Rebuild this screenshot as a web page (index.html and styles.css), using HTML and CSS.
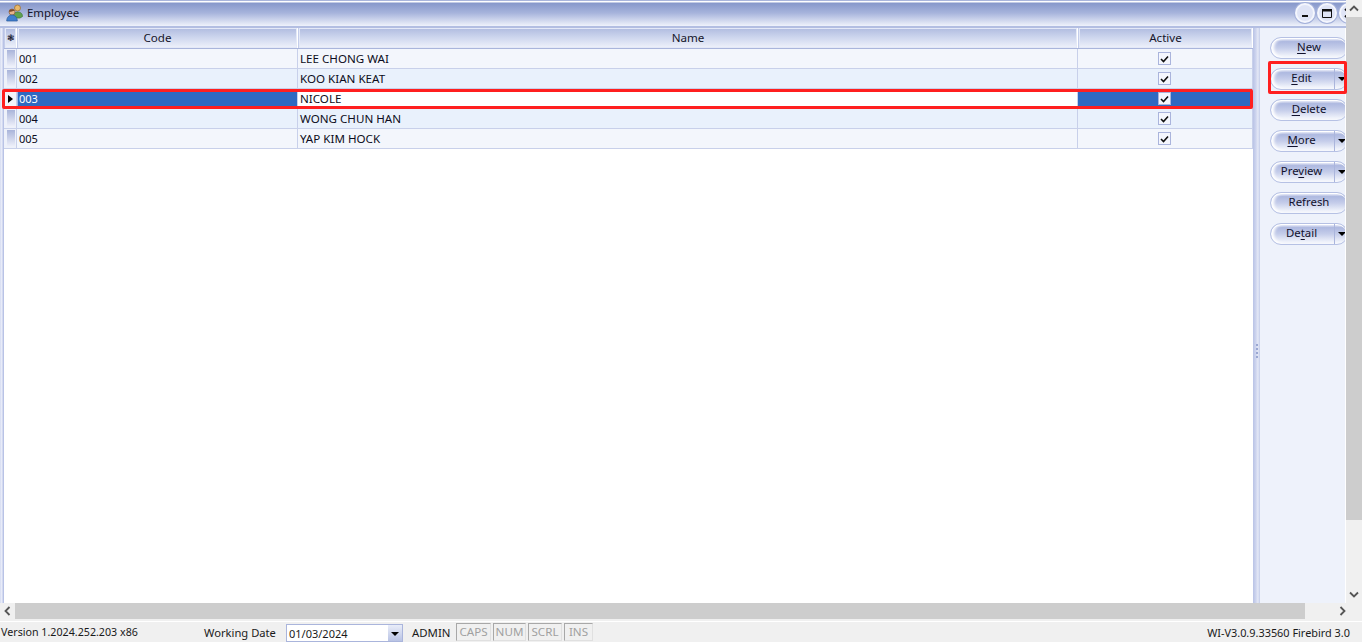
FILE: index.html
```html
<!DOCTYPE html>
<html lang="en">
<head>
<meta charset="utf-8">
<title>Employee</title>
<link rel="stylesheet" href="styles.css">
</head>
<body>
<div class="app">
  <div class="top">
    <div class="window">
      <div class="titlebar">
        <svg class="appicon" width="18" height="18" viewBox="0 0 18 18">
          <circle cx="11.5" cy="4" r="3" fill="#e9b86a" stroke="#9a6a2a" stroke-width=".7"/>
          <path d="M7 13c0-3 2-5 4.500-5S16.500 9 16.500 12.500L14 14H8z" fill="#5fa24f" stroke="#3f7a3a" stroke-width=".7"/>
          <circle cx="6" cy="8" r="3" fill="#e8b48a" stroke="#8a5a3a" stroke-width=".7"/>
          <path d="M6 5.200c-2 0-3 1-3 2.500 1.500 0 4-.5 5.500-1C8 5.600 7 5.200 6 5.200z" fill="#7a4a2a"/>
          <path d="M.7 17c0-3.500 2.300-6 5.300-6s5.300 2.500 5.300 6z" fill="#3f7fd0" stroke="#2a5a9a" stroke-width=".7"/>
        </svg>
        <span class="title">Employee</span>
        <div class="winbtns">
          <span class="winbtn"><svg width="10" height="10" viewBox="0 0 10 10"><rect x="2" y="7" width="6" height="2" fill="#111"/></svg></span>
          <span class="winbtn"><svg width="10" height="10" viewBox="0 0 10 10"><path d="M.5 1.500h9v8h-9z" fill="none" stroke="#111"/><rect x="0" y="1" width="10" height="2.500" fill="#111"/></svg></span>
          <span class="winbtn"><svg width="10" height="10" viewBox="0 0 10 10"><path d="M1 1l8 8M9 1l-8 8" stroke="#111" stroke-width="1.800"/></svg></span>
        </div>
      </div>
      <div class="body">
        <div class="grid">
          <div class="row head">
            <div class="hcell star">&#10051;</div>
            <div class="hcell">Code</div>
            <div class="hcell">Name</div>
            <div class="hcell">Active</div>
          </div>
          <div class="row odd">
            <div class="ind"><i></i></div><div class="cell">001</div><div class="cell name">LEE CHONG WAI</div>
            <div class="cell check"><span class="box"><svg width="9" height="8" viewBox="0 0 9 8"><path d="M1 4l2.500 2.500L8 1.500" fill="none" stroke="#111" stroke-width="1.600"/></svg></span></div>
          </div>
          <div class="row even">
            <div class="ind"><i></i></div><div class="cell">002</div><div class="cell name">KOO KIAN KEAT</div>
            <div class="cell check"><span class="box"><svg width="9" height="8" viewBox="0 0 9 8"><path d="M1 4l2.500 2.500L8 1.500" fill="none" stroke="#111" stroke-width="1.600"/></svg></span></div>
          </div>
          <div class="row selected">
            <div class="ind current"><b></b></div><div class="cell focus">003</div><div class="cell name">NICOLE</div>
            <div class="cell check"><span class="box"><svg width="9" height="8" viewBox="0 0 9 8"><path d="M1 4l2.500 2.500L8 1.500" fill="none" stroke="#111" stroke-width="1.600"/></svg></span></div>
          </div>
          <div class="row even">
            <div class="ind"><i></i></div><div class="cell">004</div><div class="cell name">WONG CHUN HAN</div>
            <div class="cell check"><span class="box"><svg width="9" height="8" viewBox="0 0 9 8"><path d="M1 4l2.500 2.500L8 1.500" fill="none" stroke="#111" stroke-width="1.600"/></svg></span></div>
          </div>
          <div class="row odd">
            <div class="ind"><i></i></div><div class="cell">005</div><div class="cell name">YAP KIM HOCK</div>
            <div class="cell check"><span class="box"><svg width="9" height="8" viewBox="0 0 9 8"><path d="M1 4l2.500 2.500L8 1.500" fill="none" stroke="#111" stroke-width="1.600"/></svg></span></div>
          </div>
        </div>
        <div class="splitter"><span class="grip"></span></div>
        <div class="side">
          <div class="btn"><span class="lbl"><u>N</u>ew</span></div>
          <div class="btn split"><span class="lbl"><u>E</u>dit</span><span class="drop"></span></div>
          <div class="btn"><span class="lbl"><u>D</u>elete</span></div>
          <div class="btn split"><span class="lbl"><u>M</u>ore</span><span class="drop"></span></div>
          <div class="btn split"><span class="lbl">Pre<u>v</u>iew</span><span class="drop"></span></div>
          <div class="btn"><span class="lbl">Refresh</span></div>
          <div class="btn split"><span class="lbl">De<u>t</u>ail</span><span class="drop"></span></div>
        </div>
      </div>
    </div>
    <div class="vscroll">
      <span class="sbtn"><svg width="10" height="7" viewBox="0 0 10 7"><path d="M1 5.500l4-4 4 4" fill="none" stroke="#555" stroke-width="1.800"/></svg></span>
      <span class="vthumb"></span>
      <span class="vtrack"></span>
      <span class="sbtn"><svg width="10" height="7" viewBox="0 0 10 7"><path d="M1 1.500l4 4 4-4" fill="none" stroke="#555" stroke-width="1.800"/></svg></span>
    </div>
  </div>
  <div class="hscroll">
    <span class="hbtn"><svg width="7" height="10" viewBox="0 0 7 10"><path d="M5.500 1l-4 4 4 4" fill="none" stroke="#555" stroke-width="1.800"/></svg></span>
    <span class="hthumb"></span>
    <span class="htrack"></span>
    <span class="hbtn"><svg width="7" height="10" viewBox="0 0 7 10"><path d="M1.500 1l4 4-4 4" fill="none" stroke="#555" stroke-width="1.800"/></svg></span>
  </div>
  <div class="status">
    <span class="version">Version 1.2024.252.203 x86</span>
    <span class="wd">Working Date</span>
    <div class="combo"><span class="date">01/03/2024</span><span class="combobtn"></span></div>
    <span class="user">ADMIN</span>
    <span class="key k1">CAPS</span>
    <span class="key k2">NUM</span>
    <span class="key k3">SCRL</span>
    <span class="key k4">INS</span>
    <span class="build">WI-V3.0.9.33560 Firebird 3.0</span>
  </div>
  <div class="mark mark-row"></div>
  <div class="mark mark-edit"></div>
</div>
</body>
</html>
```

FILE: styles.css
```css
* { box-sizing: border-box; }
html, body { margin: 0; padding: 0; background: #fff; overflow: hidden; }
body { font-family: "Noto Sans", "Liberation Sans", sans-serif; font-size: 11px; color: #111; }
.app { position: relative; width: 1362px; height: 642px; display: flex; flex-direction: column; background: #f0f0f0; }
.top { display: flex; height: 604px; }
.window { width: 1346px; display: flex; flex-direction: column; overflow: hidden; background: #fff; }
.titlebar { height: 28px; flex: none; display: flex; align-items: center; padding: 0 0 2px 6px;
  border-top: 1px solid #a9b5dc; border-bottom: 2px solid #b3bee2;
  background: linear-gradient(#fff 0, #fff 1px, #8798cb 2px, #a7b4dc 12px, #eff2fb 25px); }
.appicon { flex: none; }
.title { margin-left: 3px; color: #15152a; font-size: 11.4px; }
.winbtns { margin-left: auto; display: flex; gap: 2px; margin-right: -13px; }
.winbtn { width: 20px; height: 20px; border-radius: 50%; border: 2px solid #f4f6fd; display: flex; align-items: center; justify-content: center;
  background: #dfe4f6; box-shadow: 0 0 0 1px #a3b0da; }
.body { flex: 1; display: flex; min-height: 0; padding-left: 4px;
  background: linear-gradient(90deg, #d5dbf1 0, #eef1fb 2px, #b9c3e6 3px, #b9c3e6 4px) no-repeat 0 0 / 4px 100%; }
.grid { width: 1249px; flex: none; }
.row { display: grid; grid-template-columns: 13px 281px 780px 175px; height: 20px; }
.head { height: 21px; border-bottom: 1px solid #aab5dc; }
.hcell { text-align: center; line-height: 19px; color: #15152a; font-size: 11.6px; border-right: 1px solid #fff; box-shadow: inset 0 0 0 1px #e4e9f7;
  background: linear-gradient(#b0bbe0, #c9d2ec 40%, #eff2fb); border-left: 1px solid #c4cdea; }
.star { font-size: 9px; padding: 0; }
.cell { padding: 1px 0 0 2px; line-height: 18px; border-right: 1px solid #c8d0ea; border-bottom: 1px solid #c8d0ea; color: #0c0c20; white-space: nowrap; }
.odd .cell { background: #f3f6fc; }
.even .cell { background: #e9f1fc; }
.name { font-size: 11.6px; }
.ind { border-right: 1px solid #c8d0ea; border-bottom: 1px solid #c8d0ea; background: #eef1fa; padding: 1px 1px 1px 3px; }
.ind i { display: block; width: 8px; height: 100%; background: linear-gradient(#a9b4da, #f0f2fb); }
.current { background: #f2f4fb; display: flex; align-items: center; padding-left: 4px; }
.current b { width: 0; height: 0; border-left: 5px solid #000; border-top: 4.500px solid transparent; border-bottom: 4.500px solid transparent; }
.selected .cell { background: #fff; }
.selected .focus { background: #2f69c1; color: #fff; box-shadow: inset 1px 0 0 #9db8e6; }
.selected .check { background: #2f69c1; }
.check { display: flex; align-items: center; justify-content: center; padding: 0 2px 0 0; }
.box { width: 13px; height: 13px; border: 1px solid #aab4dc; background: #f4f6fd; display: flex; align-items: center; justify-content: center; }
.splitter { width: 7px; flex: none; display: flex; align-items: center; justify-content: center;
  background: linear-gradient(90deg, #b9c3e6, #cdd4ee 40%, #e4e8f6 70%, #c3cce9); }
.grip { width: 2px; height: 14px; margin-top: 70px; background: repeating-linear-gradient(#9aa7d2 0 2px, transparent 2px 4px); }
.side { flex: 1; background: #eef2fb; padding: 9px 0 0 10px; display: flex; flex-direction: column; gap: 9px; overflow: hidden; border-right: 1px solid #fff; font-size: 11.4px; }
.btn { flex: none; width: 78px; height: 22px; display: flex; align-items: stretch; border: 1px solid #b6c1e4; border-radius: 11px;
  background: linear-gradient(#f4f6fd, #aeb9e0 18%, #c5cdea 50%, #f0f3fb 90%);
  box-shadow: inset 3px 0 3px #fff, inset 0 1px 0 #fff; color: #11112c; }
.lbl { flex: 1; text-align: center; line-height: 17px; }
.split .lbl { padding-right: 2px; }
.lbl u { text-underline-offset: 2px; }
.drop { width: 13px; flex: none; border-left: 1px solid #aab5dc; position: relative; }
.drop::after { content: ""; position: absolute; left: 3px; top: 8px; border-top: 4px solid #000; border-left: 4px solid transparent; border-right: 4px solid transparent; }
.vscroll { width: 16px; flex: none; display: flex; flex-direction: column; background: #f0f0f0; }
.sbtn { height: 17px; flex: none; display: flex; align-items: center; justify-content: center; }
.vthumb { height: 503px; flex: none; background: #cdcdcd; }
.vtrack { flex: 1; }
.hscroll { height: 16px; flex: none; display: flex; background: #f0f0f0; }
.hbtn { width: 15px; flex: none; display: flex; align-items: center; justify-content: center; }
.hthumb { width: 1290px; flex: none; background: #cdcdcd; }
.htrack { flex: 1; }
.hscroll .hbtn:last-child { width: 52px; justify-content: flex-start; padding-left: 29px; }
.status { flex: 1; display: flex; align-items: center; margin-top: 2px; padding: 0 12px 0 1px; border-top: 1px solid #fff; background: #f0f0f0; white-space: nowrap; color: #1a1a1a; }
.version { width: 203px; font-size: 10.7px; }
.wd { width: 82px; font-size: 11.2px; }
.combo { width: 117px; height: 18px; margin-top: 2px; display: flex; border: 1px solid #aab5dc; background: #fff; }
.date { flex: 1; padding-left: 2px; line-height: 17px; }
.combobtn { width: 14px; position: relative; background: linear-gradient(#e9edf9, #b9c3e4); }
.combobtn::after { content: ""; position: absolute; left: 3px; top: 7px; border-top: 4px solid #000; border-left: 4px solid transparent; border-right: 4px solid transparent; }
.user { margin-left: 9px; width: 44px; font-size: 11.4px; }
.key { height: 18px; margin-left: 2px; padding: 0 1px; line-height: 16px; text-align: center; font-size: 11.6px; color: #a0a0a0; border: 1px solid #a8a8a8; border-right-color: #e0e0e0; border-bottom-color: #e0e0e0; }
.k1 { width: 35px; margin-left: 0; }
.k2 { width: 33px; }
.k3 { width: 34px; }
.k4 { width: 29px; }
.build { margin-left: auto; font-size: 10.9px; }
.mark { position: absolute; border: 3px solid #ff1f1f; border-radius: 2px; pointer-events: none; }
.mark-row { left: 2px; top: 89px; width: 1251px; height: 20px; }
.mark-edit { left: 1268px; top: 61px; width: 79px; height: 33px; }
```
